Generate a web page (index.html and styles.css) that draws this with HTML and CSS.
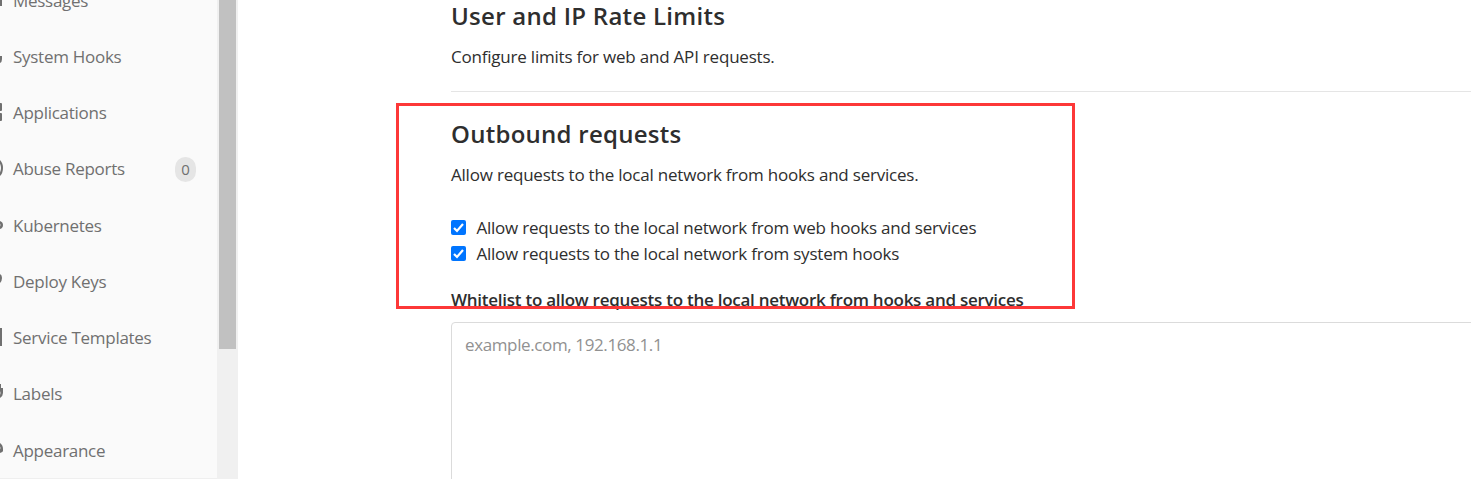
FILE: index.html
```html
<!DOCTYPE html>
<html lang="en">
<head>
<meta charset="utf-8">
<title>Network settings</title>
<link rel="stylesheet" href="styles.css">
</head>
<body>
<div class="page">
  <aside class="sidebar">
    <nav class="menu">
      <a class="item"><svg class="icon" viewBox="0 0 4 20"><path d="M0 0H2V15H0Z"/></svg><span class="name">Messages</span></a>
      <a class="item"><svg class="icon" viewBox="0 0 4 20"><path d="M0 9H2V12Q2 15 0 16Z"/></svg><span class="name">System Hooks</span></a>
      <a class="item"><svg class="icon" viewBox="0 0 4 20"><path d="M0 0H1Q2 0 2 1V7Q2 8 1 8H0ZM0 10H1Q2 10 2 11V17Q2 18 1 18H0Z"/></svg><span class="name">Applications</span></a>
      <a class="item"><svg class="icon" viewBox="0 0 4 20"><path d="M0 1Q3 4 3 9T0 17V13.500Q1 11 1 9T0 4.500Z"/></svg><span class="name">Abuse Reports</span><span class="badge">0</span></a>
      <a class="item"><svg class="icon" viewBox="0 0 4 20"><path d="M0 5Q3 6 3 9T0 13V10.500Q1 9 0 7.500Z"/></svg><span class="name">Kubernetes</span></a>
      <a class="item"><svg class="icon" viewBox="0 0 4 20"><path d="M0 2Q2 3 2 6T0 11Z"/></svg><span class="name">Deploy Keys</span></a>
      <a class="item"><svg class="icon" viewBox="0 0 4 20"><path d="M0 0H2V18H0Z"/></svg><span class="name">Service Templates</span></a>
      <a class="item"><svg class="icon" viewBox="0 0 4 20"><path d="M0 0H1V4H3V9Q3 12 0 14V11Q1 9 0 7Z"/></svg><span class="name">Labels</span></a>
      <a class="item"><svg class="icon" viewBox="0 0 4 20"><path d="M0 2Q3 4 3 8V10Q3 11 0 12V8.500Q1 7 0 5.500Z"/></svg><span class="name">Appearance</span></a>
    </nav>
    <div class="track"><div class="thumb"></div></div>
  </aside>
  <main class="content">
    <section class="limits">
      <h4 class="title">User and IP Rate Limits</h4>
      <p class="desc">Configure limits for web and API requests.</p>
    </section>
    <section class="outbound">
      <h4 class="title">Outbound requests</h4>
      <p class="desc">Allow requests to the local network from hooks and services.</p>
      <div class="checks">
        <label class="check"><svg class="box" viewBox="0 0 15 15"><rect width="15" height="15" rx="2"/><path d="M3 8L6 11L12 4"/></svg><span>Allow requests to the local network from web hooks and services</span></label>
        <label class="check"><svg class="box" viewBox="0 0 15 15"><rect width="15" height="15" rx="2"/><path d="M3 8L6 11L12 4"/></svg><span>Allow requests to the local network from system hooks</span></label>
      </div>
      <div class="label">Whitelist to allow requests to the local network from hooks and services</div>
      <div class="field">example.com, 192.168.1.1</div>
    </section>
  </main>
  <div class="highlight"></div>
</div>
</body>
</html>
```
FILE: styles.css
```css
* { box-sizing: border-box; }
body { margin: 0; background: #fff; color: #2e2e2e; font: 17px/26px "Open Sans", "Noto Sans", sans-serif; }
.page { position: relative; display: flex; height: 479px; overflow: hidden; }
.sidebar { display: flex; width: 238px; flex: none; background: #fafafa; }
.menu { width: 217px; height: 479px; overflow: hidden; border-bottom: 1px solid #efefef; display: flex; flex-direction: column; }
.item { display: flex; align-items: center; flex: none; height: 56.25px; color: #707070; letter-spacing: -.28px; }
.item:first-child { margin-top: -27.45px; }
.icon { width: 4px; height: 20px; margin-right: 9px; fill: #707070; }
.badge { margin-left: auto; margin-right: 21px; width: 21px; height: 25px; border-radius: 11px; background: #e5e5e5; font-size: 15px; line-height: 25px; text-align: center; letter-spacing: 0; }
.track { width: 21px; padding: 0 2px; background: #f0f0f0; }
.thumb { height: 349px; background: #c1c1c1; }
.content { flex: 1; min-width: 0; padding-left: 213px; white-space: nowrap; }
.limits { height: 92px; border-bottom: 1px solid #e5e5e5; }
.title { margin: 0; font-size: 24px; line-height: 32px; font-weight: 600; letter-spacing: .27px; }
.desc { margin: 0; padding-top: 12px; letter-spacing: -.21px; }
.outbound { padding-top: 26px; }
.checks { padding-top: 27px; }
.check { display: flex; align-items: center; height: 26px; gap: 10px; letter-spacing: -.21px; }
.box { width: 15px; height: 15px; margin: 0 .4px 2px 0; fill: #0075ff; }
.box path { fill: none; stroke: #fff; stroke-width: 2.2; }
.label { padding-top: 20px; font-weight: 600; letter-spacing: -.26px; }
.field { height: 180px; margin-top: 9px; margin-right: -10px; padding: 9px 13px; border: 1px solid #dbdbdb; border-radius: 4px; color: #919191; letter-spacing: -.38px; }
.highlight { position: absolute; left: 396px; top: 103px; width: 679px; height: 206px; border: 3px solid #fd3838; }
```
